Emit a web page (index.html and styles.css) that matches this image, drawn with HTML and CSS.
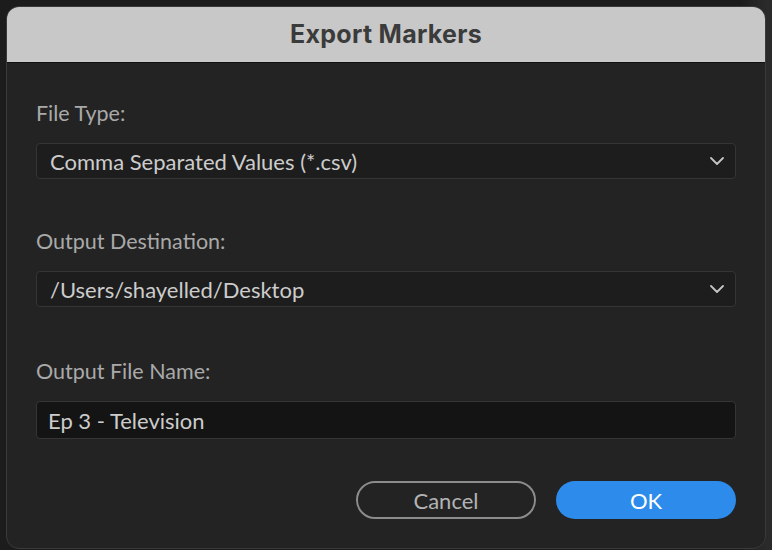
FILE: index.html
```html
<!DOCTYPE html>
<html>
<head>
<meta charset="utf-8">
<link rel="stylesheet" href="styles.css">
</head>
<body>
<div class="dialog">
  <div class="titlebar">Export Markers</div>
  <div class="content">
    <div class="field">
      <div class="label">File Type:</div>
      <div class="select">
        <span>Comma Separated Values (*.csv)</span>
        <svg class="chev" width="14" height="8" viewBox="0 0 14 8"><path d="M1 1 L7 7 L13 1" fill="none" stroke="#c4c4c4" stroke-width="1.8" stroke-linecap="round" stroke-linejoin="round"/></svg>
      </div>
    </div>
    <div class="field">
      <div class="label">Output Destination:</div>
      <div class="select">
        <span>/Users/shayelled/Desktop</span>
        <svg class="chev" width="14" height="8" viewBox="0 0 14 8"><path d="M1 1 L7 7 L13 1" fill="none" stroke="#c4c4c4" stroke-width="1.8" stroke-linecap="round" stroke-linejoin="round"/></svg>
      </div>
    </div>
    <div class="field field-last">
      <div class="label">Output File Name:</div>
      <div class="input">Ep 3 - Television</div>
    </div>
    <div class="buttons">
      <div class="btn cancel">Cancel</div>
      <div class="btn ok">OK</div>
    </div>
  </div>
</div>
</body>
</html>
```
FILE: styles.css
```css
html, body {
  margin: 0;
  padding: 0;
}
body {
  width: 772px;
  height: 550px;
  overflow: hidden;
  background: linear-gradient(90deg, #1c1c1c 0, #1c1c1c 740px, #2a2a2a 766px);
  padding: 6px 0 0 6px;
  box-sizing: border-box;
  font-family: "Lato", "Open Sans", sans-serif;
}
.dialog {
  width: 760px;
  height: 543px;
  box-sizing: border-box;
  background: #232323;
  border: 1px solid #3a3a3a;
  border-radius: 13px;
  overflow: hidden;
  display: flex;
  flex-direction: column;
}
.titlebar {
  height: 54px;
  flex: none;
  background: #c8c8c8;
  border-bottom: 1px solid #111;
  display: flex;
  align-items: center;
  justify-content: center;
  font-family: "Inter", "Liberation Sans", sans-serif;
  font-weight: 700;
  font-size: 25px;
  letter-spacing: 0.3px;
  color: #3b3b3b;
  padding-bottom: 1px;
}
.content {
  padding: 38px 29px 0 29px;
  display: flex;
  flex-direction: column;
}
.field + .field {
  margin-top: 50px;
}
.field + .field-last {
  margin-top: 52px;
}
.label {
  height: 24px;
  line-height: 24px;
  font-size: 21.5px;
  color: #a9a9a9;
}
.select, .input {
  margin-top: 18px;
  height: 36px;
  box-sizing: border-box;
  border: 1px solid #353535;
  border-radius: 4px;
  background: #1d1d1d;
  display: flex;
  align-items: center;
  justify-content: space-between;
  padding: 0 11px 0 13px;
  font-size: 22px;
  color: #cccccc;
}
.input {
  height: 38px;
  background: #141414;
  padding-left: 11px;
}
.chev {
  display: block;
}
.buttons {
  margin-top: 42px;
  display: flex;
  justify-content: flex-end;
  gap: 20px;
}
.btn {
  width: 180px;
  height: 38px;
  box-sizing: border-box;
  border-radius: 19px;
  display: flex;
  align-items: center;
  justify-content: center;
  font-size: 22px;
}
.cancel {
  border: 2px solid #8c8c8c;
  color: #b3b3b3;
}
.ok {
  background: #2d8ceb;
  color: #ffffff;
}
```
